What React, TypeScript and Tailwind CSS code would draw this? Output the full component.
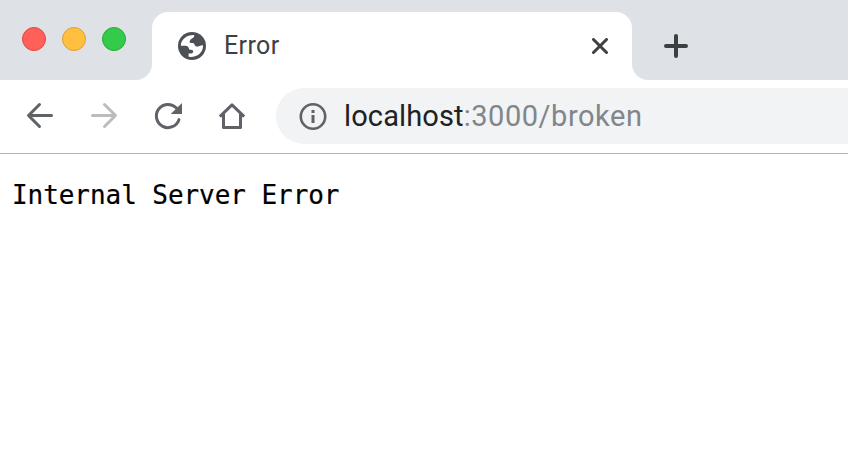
const dots = [
  'bg-[#ff615a] border-[#e2463f]',
  'bg-[#ffbf3f] border-[#dea035]',
  'bg-[#34ca4a] border-[#27aa35]',
];

function TabStrip() {
  return (
    <div className="flex h-20 bg-[#dee1e6]">
      <div className="flex w-[136px] gap-4 pl-[22px] pt-[27px]">
        {dots.map((d) => (
          <span key={d} className={`size-6 shrink-0 rounded-full border ${d}`} />
        ))}
      </div>
      <div className="w-4 bg-white">
        <div className="h-20 rounded-br-[16px] bg-[#dee1e6]" />
      </div>
      <div className="mt-3 flex h-[68px] w-[480px] shrink-0 items-center rounded-t-2xl bg-white pl-[26px]">
        <svg className="size-7 shrink-0" viewBox="0 0 28 28">
          <circle cx="14" cy="14" r="14" fill="#4d5156" />
          <path
            fill="#fff"
            d="M2.8 13.8C3 8 8 3 16.3 3.1C16.4 5.2 15.4 6 13.6 6.8C12 7.6 11.4 9 11.8 10.8C13.2 11.4 15.8 10.6 16.4 12.2C16.8 14.2 18.5 14.9 20.5 14.5C22 14.2 23 13.2 25 13.4C25.2 20 20 25.6 10.6 24.8V21.5C13 21.8 15.2 21.2 15.2 19.4C15.2 17.6 13.4 17.6 11.2 17.4C11 15.3 9.5 13.8 7.5 13.8Z"
          />
        </svg>
        <span className="ml-[18px] w-[368px] font-['Roboto',sans-serif] text-[25px] leading-8 tracking-[0.4px] text-[#3c4043]">Error</span>
        <svg className="size-4 shrink-0" viewBox="0 0 16 16" stroke="#3c4043" strokeWidth="3" strokeLinecap="round">
          <path d="M1.5 1.5l13 13M14.5 1.5l-13 13" />
        </svg>
      </div>
      <div className="w-4 bg-white">
        <div className="h-20 rounded-bl-[16px] bg-[#dee1e6]" />
      </div>
      <svg className="ml-4 mt-[34px] size-6" viewBox="0 0 24 24" stroke="#3c4043" strokeWidth="4" strokeLinecap="round">
        <path d="M2 12h20M12 2v20" />
      </svg>
    </div>
  );
}

function Toolbar() {
  return (
    <div className="flex h-[74px] border-b border-[#b3b3b3] bg-white pl-6 pt-2">
      <div className="flex h-14 w-[252px] items-center gap-8">
        <svg className="size-8 shrink-0" viewBox="0 0 32 32" fill="none" stroke="#5f6368" strokeWidth="3" strokeLinecap="round" strokeLinejoin="round">
          <path d="M27.5 15.5H4.8M15.5 4.5l-11 11 11 11" />
        </svg>
        <svg className="size-8 shrink-0" viewBox="0 0 32 32" fill="none" stroke="#babcbe" strokeWidth="3" strokeLinecap="round" strokeLinejoin="round">
          <path d="M4.5 15.5h22.7M16.5 4.5l11 11-11 11" />
        </svg>
        <svg className="size-8 shrink-0" viewBox="0 0 32 32">
          <path d="M24.2 7.8A11.6 11.6 0 1 0 27 19.6" fill="none" stroke="#5f6368" strokeWidth="3" strokeLinecap="round" />
          <path d="M30 3v11H18.7z" fill="#5f6368" />
        </svg>
        <svg className="size-8 shrink-0" viewBox="0 0 32 32" fill="none" stroke="#5f6368" strokeWidth="3" strokeLinejoin="round">
          <path d="M7.5 14v13.5h17V14" />
          <path d="M3.8 16.6L16 4.9l12.2 11.7" />
        </svg>
      </div>
      <div className="flex h-14 flex-1 items-center rounded-l-full bg-[#f1f3f4] pl-[22.5px]">
        <svg className="size-7 shrink-0" viewBox="0 0 28 28">
          <circle cx="14" cy="14.5" r="12.2" fill="none" stroke="#5f6368" strokeWidth="2.6" />
          <path d="M12.5 8h3v3h-3zM12.5 13h3v8h-3z" fill="#5f6368" />
        </svg>
        <div className="ml-[17.5px] whitespace-nowrap font-['Roboto',sans-serif] text-[29px] leading-9 tracking-[0.12px] text-[#202124]">
          localhost<span className="tracking-[0.54px] text-[#80868b]">:3000/broken</span>
        </div>
      </div>
    </div>
  );
}

export default function App() {
  return (
    <div className="h-[476px] w-[848px] overflow-hidden bg-white">
      <TabStrip />
      <Toolbar />
      <pre className="pl-3 pt-[25px] font-['DejaVu_Sans_Mono',monospace] text-[26px] leading-8 tracking-[-0.06px] text-black [-webkit-text-stroke:0.2px_black]">Internal Server Error</pre>
    </div>
  );
}
